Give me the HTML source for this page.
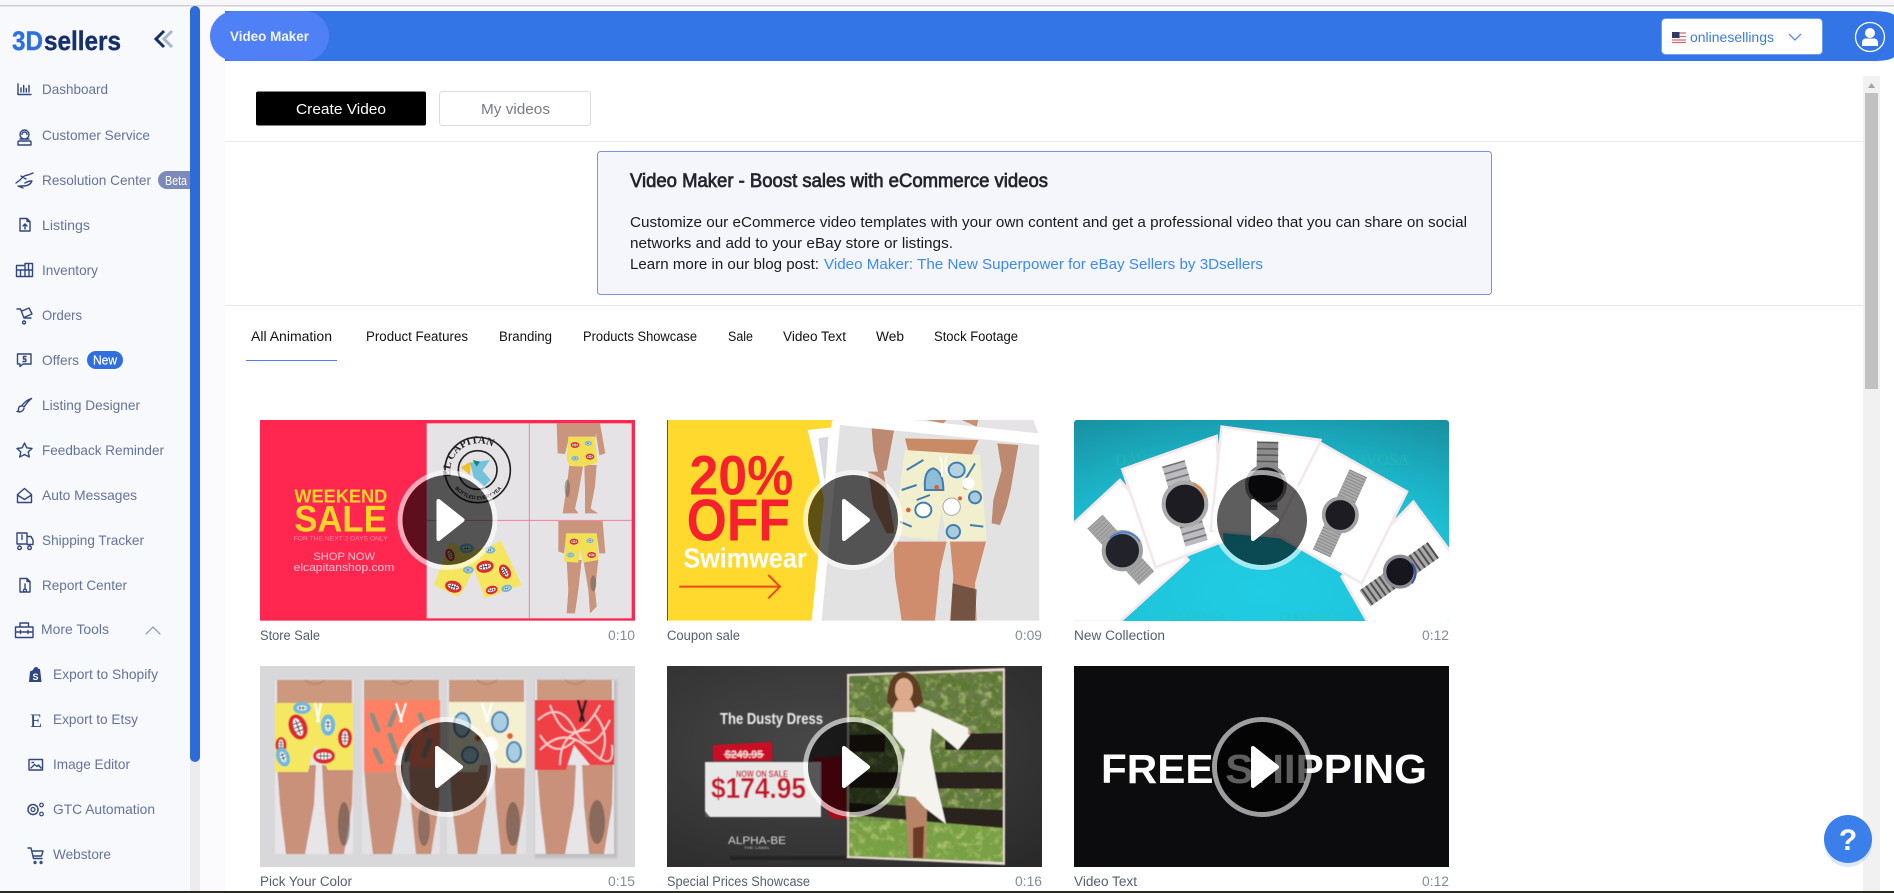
<!DOCTYPE html>
<html lang="en"><head><meta charset="utf-8"><title>3Dsellers Video Maker</title>
<style>
html,body{margin:0;padding:0;background:#fff;width:1894px;height:893px;overflow:hidden}
svg{display:block;font-family:"Liberation Sans",sans-serif}
.n{font-size:14px;fill:#64739c}
.i{fill:none;stroke:#2f4680;stroke-width:1.4;stroke-linejoin:round;stroke-linecap:round}
.t{font-size:13.5px;fill:#111}
.c{font-size:13.5px;fill:#555e70}
.d{font-size:13.5px;fill:#838c9a}
.p{font-size:15px;fill:#1a1a1a}
</style></head><body>
<svg width="1894" height="893" viewBox="0 0 1894 893" xmlns="http://www.w3.org/2000/svg">
<defs>
<filter id="b" x="-5%" y="-5%" width="110%" height="110%"><feGaussianBlur stdDeviation="0.5"/></filter>
<filter id="b2" x="-20%" y="-20%" width="140%" height="140%"><feGaussianBlur stdDeviation="1.2"/></filter>
<filter id="dk1" x="0" y="0" width="100%" height="100%"><feTurbulence type="fractalNoise" baseFrequency=".1" numOctaves="3" seed="4"/><feColorMatrix values="0 0 0 0 .14  0 0 0 0 .2  0 0 0 0 .07  2.6 0 0 0 -.8"/></filter>
<filter id="lt1" x="0" y="0" width="100%" height="100%"><feTurbulence type="fractalNoise" baseFrequency=".12" numOctaves="3" seed="11"/><feColorMatrix values="0 0 0 0 .62  0 0 0 0 .68  0 0 0 0 .25  2 0 0 0 -1"/></filter>
<clipPath id="c1"><rect x="260" y="420" width="375" height="201"/></clipPath>
<clipPath id="c2"><rect x="667" y="420" width="375" height="201"/></clipPath>
<clipPath id="c3"><rect x="1074" y="420" width="375" height="201" rx="3"/></clipPath>
<clipPath id="c4"><rect x="260" y="666" width="375" height="201"/></clipPath>
<clipPath id="c5"><rect x="667" y="666" width="375" height="201"/></clipPath>
<clipPath id="ph"><path d="M849 676 1003 671V862L849 856Z"/></clipPath>
<radialGradient id="teal" cx=".5" cy=".85" r="1"><stop offset="0" stop-color="#20cde4"/><stop offset=".55" stop-color="#1ec0d6"/><stop offset="1" stop-color="#178e9e"/></radialGradient>
<radialGradient id="dk" cx=".4" cy=".4" r=".8"><stop offset="0" stop-color="#484848"/><stop offset="1" stop-color="#2a2a2a"/></radialGradient>
<g id="mr"><ellipse rx="10" ry="7" fill="#dc2a32"/><ellipse rx="7" ry="3.200" fill="#fff"/><path d="M-6 0H6M-3-3V3M0-3V3M3-3V3" stroke="#222" stroke-width=".8"/></g>
<g id="mb"><ellipse rx="9" ry="6" fill="#6fb9dc"/><ellipse rx="5" ry="2.500" fill="#fff"/><path d="M-4 0H4M-2-2V2M1-2V2" stroke="#222" stroke-width=".8"/></g>
<g id="play"><circle r="47.500" fill="none" stroke="#fff" stroke-opacity=".6" stroke-width="5"/><circle r="45" fill="#000" fill-opacity=".63"/><path d="M-9-19 15 0-9 19Z" fill="#fff" stroke="#fff" stroke-width="4" stroke-linejoin="round"/></g>
<g id="man"><path d="M2 0H77L77 30H2Z" fill="#cc997f"/><path d="M30 0Q40 8 50 0" fill="none" stroke="#b07e66"/><path d="M2 85H41L39 125 30 174H11L5 125Z" fill="#c9917a"/><path d="M47 85H78L77 125 69 174H54L49 125Z" fill="#c9917a"/></g>
</defs>

<rect width="1894" height="893" fill="#fff"/>
<rect width="1894" height="5" fill="#f7f7f9"/>
<rect y="5" width="1894" height="1.500" fill="#cfcfcf"/>

<!-- sidebar -->
<rect y="7" width="190" height="884" fill="#f8f9fc"/>
<rect x="190" y="7" width="10" height="884" fill="#ececee"/>
<rect x="190" y="6" width="10" height="756" rx="5" fill="#2c6bd8"/>
<rect x="200" y="7" width="25" height="884" fill="#fbfbfe"/>
<text x="12" y="50" font-size="27" font-weight="700" fill="#2c70e2" stroke="#2c70e2" stroke-width=".4" textLength="31" lengthAdjust="spacingAndGlyphs">3D</text>
<text x="44" y="50" font-size="27" font-weight="700" fill="#15306c" stroke="#15306c" stroke-width=".4" textLength="77" lengthAdjust="spacingAndGlyphs">sellers</text>
<path d="M164 31 156 39 164 47" fill="none" stroke="#15306c" stroke-width="3"/>
<path d="M172 31 164 39 172 47" fill="none" stroke="#a8b4ce" stroke-width="3"/>

<g>
<text class="n" x="42" y="94" textLength="66" lengthAdjust="spacingAndGlyphs">Dashboard</text>
<text class="n" x="42" y="140" textLength="108" lengthAdjust="spacingAndGlyphs">Customer Service</text>
<text class="n" x="42" y="185" textLength="109" lengthAdjust="spacingAndGlyphs">Resolution Center</text>
<text class="n" x="42" y="230" textLength="48" lengthAdjust="spacingAndGlyphs">Listings</text>
<text class="n" x="42" y="275" textLength="56" lengthAdjust="spacingAndGlyphs">Inventory</text>
<text class="n" x="42" y="320" textLength="40" lengthAdjust="spacingAndGlyphs">Orders</text>
<text class="n" x="42" y="365" textLength="37" lengthAdjust="spacingAndGlyphs">Offers</text>
<text class="n" x="42" y="410" textLength="98" lengthAdjust="spacingAndGlyphs">Listing Designer</text>
<text class="n" x="42" y="455" textLength="122" lengthAdjust="spacingAndGlyphs">Feedback Reminder</text>
<text class="n" x="42" y="500" textLength="95" lengthAdjust="spacingAndGlyphs">Auto Messages</text>
<text class="n" x="42" y="545" textLength="102" lengthAdjust="spacingAndGlyphs">Shipping Tracker</text>
<text class="n" x="42" y="590" textLength="85" lengthAdjust="spacingAndGlyphs">Report Center</text>
<text class="n" x="41" y="634" textLength="68" lengthAdjust="spacingAndGlyphs">More Tools</text>
<text class="n" x="53" y="679" textLength="105" lengthAdjust="spacingAndGlyphs">Export to Shopify</text>
<text class="n" x="53" y="724" textLength="85" lengthAdjust="spacingAndGlyphs">Export to Etsy</text>
<text class="n" x="53" y="769" textLength="77" lengthAdjust="spacingAndGlyphs">Image Editor</text>
<text class="n" x="53" y="814" textLength="102" lengthAdjust="spacingAndGlyphs">GTC Automation</text>
<text class="n" x="53" y="859" textLength="58" lengthAdjust="spacingAndGlyphs">Webstore</text>
</g>
<path d="M158 180a9 9 0 0 1 9-9H190V189H167a9 9 0 0 1-9-9Z" fill="#7b8ab8"/>
<text x="165" y="185" font-size="13" fill="#fff" textLength="22" lengthAdjust="spacingAndGlyphs">Beta</text>
<rect x="87" y="351" width="36" height="18" rx="9" fill="#2f6fe0"/>
<text x="93" y="364.500" font-size="13" fill="#fff" stroke="#fff" stroke-width=".2" textLength="24" lengthAdjust="spacingAndGlyphs">New</text>

<!-- sidebar icons -->
<g class="i">
<path d="M18 84V94.500H31M21 92V88M23.700 92V85.500M26.300 92V88.500M29 92V85.500"/>
<path d="M19 141H30Q31 141 31 142.500V145H18V142.500Q18 141 19 141ZM20 134.500A4.500 4.500 0 1 1 29 134.500A4.500 4.500 0 0 1 20 134.500ZM22 134.500A2.500 2.500 0 0 1 27 134.500M20 139 29 139"/>
<path d="M16 183 20 180Q24 175 28 175L33 173M20 186 23 186Q30 186 32 181 28 181 25 183M21 176 26 179M23 188 18 186"/>
<path d="M20 218.500H27L30 221.500V231H20ZM27 218.500V221.500H30M25 229V224M23 226 25 224 27 226"/>
<path d="M16.500 276.500V265.500H25V263.500H32.500V276.500ZM16.500 270H32.500M20.500 270V276.500M25 265.500V276.500M29 270V276.500M28.500 263.500V270"/>
<path d="M17 309H20.500L24 318H31M22 311 29 308 32 314 25 317M24 321A1.500 1.500 0 1 0 24.100 321"/>
<path d="M17.500 354H31V364H23L20 366.500V364H17.500ZM26 356.500H23.500V359H25.800V361.500H23"/>
<path d="M31.500 398.500Q28 401 24 407L22 405.500Q26 400 31.500 398.500ZM21.500 406Q18 406 18.500 410.500 17.500 411.500 17 411.500 22 413 24 408.500"/>
<path d="M24.500 443 26.800 447.800 32 448.500 28.200 452 29.300 457 24.500 454.500 19.700 457 20.800 452 17 448.500 22.200 447.800Z"/>
<path d="M17.500 494.500 24.500 488.500 31.500 494.500V502.500H17.500ZM17.500 495 24.500 499.500 31.500 495"/>
<path d="M17 533H27V544H17ZM27 536.500H31L33 540V544.500H27M19.500 546A1.800 1.800 0 1 0 19.600 546M29.500 546A1.800 1.800 0 1 0 29.600 546M22 535V539.500"/>
<path d="M20 578.500H27L30 581.500V592H20ZM27 578.500V581.500H30M25 584V589M25 589A1.500 1.500 0 1 1 24.900 589"/>
<path d="M15.500 627H33V637.500H15.500ZM20 627V623H28.500V627M15.500 632H33M20.500 630.500V633.500M28 630.500V633.500"/>
<path d="M29 770H42.500V759.500H29ZM31 768 34.500 764.500 37 766.500 38.500 765 41 768M32 762.500H33.500"/>
<circle cx="33" cy="809.500" r="2" stroke-width="1.200"/><circle cx="33" cy="809.500" r="5" stroke-width="1.600" stroke-dasharray="2 1.300"/><circle cx="41.500" cy="805" r="1.800" stroke-width="1.200"/><circle cx="41.500" cy="814" r="1.800" stroke-width="1.200"/>
<path d="M28 848H31L33.500 858.500H42M32 851H43L41.500 856H33.500M35 861.500A1 1 0 1 0 35.100 861.500M41 861.500A1 1 0 1 0 41.100 861.500"/>
<path d="M146 634 153 627 160 634" stroke="#8392b8" stroke-width="1.200"/>
</g>
<path d="M30 671.500 33 670Q34 667 36 667 38 667 38.500 669L40 669 41.500 682H29Z" fill="#2f4680"/>
<text x="35.500" y="680" font-size="9" font-weight="700" fill="#fff" text-anchor="middle">S</text>
<text x="30" y="727" font-family="Liberation Serif, serif" font-size="19" fill="#2f4680" textLength="12" lengthAdjust="spacingAndGlyphs">E</text>

<!-- header -->
<path d="M225 11H1872Q1890 11 1894 15V57Q1890 61 1872 61H225Z" fill="#3375e6"/>
<rect x="210" y="11" width="119" height="50" rx="25" fill="#4f80f6"/>
<text x="230" y="41" font-size="14" font-weight="700" fill="#f2f5ff" textLength="79" lengthAdjust="spacingAndGlyphs">Video Maker</text>
<rect x="1661.500" y="18.500" width="161" height="36" rx="4" fill="#fff" stroke="#6f9df0"/>
<rect x="1672" y="32" width="14" height="11" fill="#fff"/>
<path d="M1672 33H1686M1672 36.500H1686M1672 40H1686M1672 42.500H1686" stroke="#d66a72" stroke-width="1.300"/>
<rect x="1672" y="32" width="7.500" height="6" fill="#303a68"/>
<text x="1690" y="42" font-size="14" fill="#3d7be0" textLength="84" lengthAdjust="spacingAndGlyphs">onlinesellings</text>
<path d="M1789 34 1795 40 1801 34" fill="none" stroke="#5a8ce6" stroke-width="1.300"/>
<circle cx="1870" cy="37" r="14.500" fill="none" stroke="#fff" stroke-width="1.300"/>
<circle cx="1870" cy="33" r="5" fill="#fff"/>
<path d="M1862 46V43Q1862 38.500 1866 38.500H1874Q1878 38.500 1878 43V46Q1878 46 1870 46Z" fill="#fff"/>

<!-- main -->
<rect x="225" y="61" width="1638" height="830" fill="#fff"/>
<rect x="256" y="91.500" width="170" height="34" rx="2" fill="#000"/>
<text x="296" y="114" font-size="14.500" fill="#fff" textLength="90" lengthAdjust="spacingAndGlyphs">Create Video</text>
<rect x="439.500" y="91.500" width="151" height="34" rx="3" fill="#fff" stroke="#dcdcdc"/>
<text x="481" y="114" font-size="14.500" fill="#777b85" textLength="69" lengthAdjust="spacingAndGlyphs">My videos</text>
<rect x="225" y="141" width="1638" height="1" fill="#ececec"/>
<rect x="597.500" y="151.500" width="894" height="143" rx="3" fill="#f5f6fc" stroke="#7c90e0"/>
<text x="630" y="187" font-size="19" fill="#24242c" stroke="#24242c" stroke-width=".7" textLength="418" lengthAdjust="spacingAndGlyphs">Video Maker - Boost sales with eCommerce videos</text>
<text class="p" x="630" y="227" textLength="837" lengthAdjust="spacingAndGlyphs">Customize our eCommerce video templates with your own content and get a professional video that you can share on social</text>
<text class="p" x="630" y="248" textLength="323" lengthAdjust="spacingAndGlyphs">networks and add to your eBay store or listings.</text>
<text class="p" x="630" y="269" textLength="189" lengthAdjust="spacingAndGlyphs">Learn more in our blog post:</text>
<text x="824" y="269" font-size="15" fill="#3a8af0" textLength="439" lengthAdjust="spacingAndGlyphs">Video Maker: The New Superpower for eBay Sellers by 3Dsellers</text>
<rect x="225" y="305" width="1638" height="1" fill="#e6e6e6"/>

<g>
<text class="t" x="251" y="341" textLength="81" lengthAdjust="spacingAndGlyphs">All Animation</text>
<text class="t" x="366" y="341" textLength="102" lengthAdjust="spacingAndGlyphs">Product Features</text>
<text class="t" x="499" y="341" textLength="53" lengthAdjust="spacingAndGlyphs">Branding</text>
<text class="t" x="583" y="341" textLength="114" lengthAdjust="spacingAndGlyphs">Products Showcase</text>
<text class="t" x="728" y="341" textLength="25" lengthAdjust="spacingAndGlyphs">Sale</text>
<text class="t" x="783" y="341" textLength="63" lengthAdjust="spacingAndGlyphs">Video Text</text>
<text class="t" x="876" y="341" textLength="28" lengthAdjust="spacingAndGlyphs">Web</text>
<text class="t" x="934" y="341" textLength="84" lengthAdjust="spacingAndGlyphs">Stock Footage</text>
</g>
<rect x="246" y="360" width="91" height="1" fill="#4a80f0"/>

<!-- thumb 1 -->
<g clip-path="url(#c1)"><g filter="url(#b)" transform="translate(250 410) scale(.33333)">
<rect x="30" y="30" width="1125" height="602" fill="#ff2650"/>
<rect x="530" y="40" width="615" height="585" fill="#e6e3e7"/>
<path d="M838 40V625M530 331H1145" stroke="#f0829a" stroke-width="3"/>
<circle cx="683" cy="180" r="98" fill="#e6e3e7" stroke="#222" stroke-width="5"/>
<circle cx="683" cy="180" r="58" fill="#e6e3e7" stroke="#222" stroke-width="5"/>
<path id="arc1" d="M602 200A82 82 0 0 1 770 170" fill="none"/>
<text font-size="32" font-family="Liberation Serif,serif" font-weight="700" fill="#222"><textPath href="#arc1">EL CAPITAN</textPath></text>
<path id="arc2" d="M615 235A90 90 0 0 0 755 235" fill="none"/>
<text font-size="15" font-weight="700" fill="#222"><textPath href="#arc2">BOTTLED EVERY YEAR</textPath></text>
<path d="M660 158 720 150 698 182 722 210 700 232 672 205Z" fill="#74c2dc"/><path d="M632 172 662 155 660 195Z" fill="#f0c020"/><path d="M668 150 690 155 680 170Z" fill="#1d7f8a"/>
<path d="M920 40H1050L1066 130 1048 136 1038 70 1035 92H955L945 132 923 130Z" fill="#c9957c"/>
<path d="M958 165H1000L985 250 975 296 985 310H938L950 230ZM1003 165H1040L1035 230 1022 296 1045 310H1005L1005 240Z" fill="#c9957c"/>
<path d="M955 80H1035L1042 158 1000 170 960 168 950 150Z" fill="#f2df55"/>
<use href="#mr" transform="translate(975 105) scale(1.300)"/><use href="#mr" transform="translate(1020 140) scale(1.300)"/><use href="#mb" transform="translate(1015 100) scale(1.200)"/><use href="#mb" transform="translate(975 145) scale(1.200)"/>
<ellipse cx="952" cy="235" rx="8" ry="26" fill="#5e5c58" opacity=".5"/>
<path d="M925 333H1058L1066 430 1048 430 1040 370H950L942 430 925 425Z" fill="#c9957c"/>
<path d="M950 450H995L985 540 975 610H950L955 540ZM1000 450H1045L1035 540 1040 590 1020 610 1015 540Z" fill="#c9957c"/>
<path d="M948 370H1040L1046 450 1000 458 990 420 985 458 942 455Z" fill="#f2df55"/>
<use href="#mr" transform="translate(972 395) scale(1.300)"/><use href="#mr" transform="translate(1025 435) scale(1.300)"/><use href="#mb" transform="translate(1020 392) scale(1.200)"/><use href="#mb" transform="translate(962 435) scale(1.200)"/>
<ellipse cx="1030" cy="520" rx="9" ry="24" fill="#5e5c58" opacity=".5"/>
<path d="M600 395Q680 440 752 392L815 525 705 565 672 478 640 540 622 560 552 525Z" fill="#f5e55f"/>
<use href="#mr" transform="translate(610 530) scale(2.500) rotate(15)"/><use href="#mr" transform="translate(705 470) scale(2.600) rotate(-10)"/><use href="#mr" transform="translate(765 485) scale(2.300) rotate(60)"/><use href="#mr" transform="translate(600 435) scale(1.900) rotate(70)"/><use href="#mr" transform="translate(725 540) scale(1.800) rotate(-15)"/>
<use href="#mb" transform="translate(650 415) scale(2.400)"/><use href="#mb" transform="translate(770 535) scale(1.800) rotate(-15)"/><use href="#mb" transform="translate(720 420) scale(1.800)"/><use href="#mb" transform="translate(655 480) scale(1.800)"/>
<text x="133" y="277" font-size="55" font-weight="700" fill="#ffd52b" textLength="279" lengthAdjust="spacingAndGlyphs">WEEKEND</text>
<text x="133" y="365" font-size="111" font-weight="700" fill="#ffd52b" textLength="277" lengthAdjust="spacingAndGlyphs">SALE</text>
<text x="131" y="391" font-size="18" fill="#ff8aa2" textLength="282" lengthAdjust="spacingAndGlyphs">FOR THE NEXT 2 DAYS ONLY</text>
<text x="190" y="450" font-size="32" fill="#ffc4ce" textLength="185" lengthAdjust="spacingAndGlyphs">SHOP NOW</text>
<text x="131" y="483" font-size="33" fill="#ffc4ce" textLength="302" lengthAdjust="spacingAndGlyphs">elcapitanshop.com</text>
</g></g>

<!-- thumb 2 -->
<g clip-path="url(#c2)"><g filter="url(#b)" transform="translate(660 410) scale(.33333)">
<rect x="21" y="30" width="1120" height="602" fill="#fff"/>
<path d="M21 30H520L455 632H21Z" fill="#ffd92e"/>
<rect x="21" y="30" width="3" height="602" fill="#6a5a18"/>
<path d="M443 60 515 52 500 300 460 130Z" fill="#fff"/><path d="M475 85 505 80 495 230Z" fill="#d9d8de"/>
<path d="M516 32 1140 72V632H455Z" fill="#fff"/>
<path d="M540 45 1138 105V632H485Z" fill="#e2e2e2"/>
<path d="M760 30H1120L1136 70Z" fill="#e6e3e6"/>
<path d="M800 30H860L850 40ZM905 30H955L950 50Z" fill="#c89070"/>
<path d="M635 55 702 62 680 180 655 190 640 120Z" fill="#bd8970"/>
<path d="M735 85 955 90 935 135 745 125Z" fill="#c98a66"/>
<path d="M1012 100 1075 105 1052 240 1040 290 1020 345 995 340 1000 270 1025 180Z" fill="#bd8970"/>
<path d="M625 185H670L705 370H680L640 290Z" fill="#bd8970"/>
<path d="M700 395H860L840 480 825 632H725L705 500ZM870 395H978L945 520 950 632H870L880 500Z" fill="#cf8d6e"/>
<path d="M878 520 950 538 945 632H872Z" fill="#3b2f28" opacity=".62"/>
<path d="M735 120 960 135 980 390 860 395 845 300 830 392 700 375Z" fill="#f2efcf"/>
<g fill="none" stroke="#3f7eae" stroke-width="6"><path d="M795 240Q790 180 820 175 850 185 850 240Z" fill="#8fbcd8"/><ellipse cx="890" cy="180" rx="24" ry="22" fill="#b5d2e2"/><ellipse cx="790" cy="300" rx="24" ry="22" fill="#fff"/><ellipse cx="880" cy="365" rx="20" ry="20" fill="#a9cadf"/><ellipse cx="945" cy="262" rx="18" ry="18" fill="#a9cadf"/><path d="M725 240 770 225M930 345 970 350M720 335 755 350M770 270 810 255M945 160 915 210M740 180 790 150"/></g>
<g fill="#e0602f"><circle cx="920" cy="228" r="11"/><circle cx="830" cy="232" r="7"/><circle cx="745" cy="300" r="7"/><circle cx="900" cy="265" r="6"/></g>
<circle cx="875" cy="290" r="26" fill="#fff" stroke="#aaa" stroke-width="3"/><circle cx="925" cy="220" r="18" fill="#fff"/><path d="M840 140Q850 170 845 200M860 140Q850 170 865 195" stroke="#fff" stroke-width="5" fill="none"/>
<text x="88" y="253" font-size="168" font-weight="700" fill="#f5232f" textLength="312" lengthAdjust="spacingAndGlyphs">20%</text>
<text x="80" y="392" font-size="178" font-weight="700" fill="#f5232f" textLength="310" lengthAdjust="spacingAndGlyphs">OFF</text>
<text x="70" y="472" font-size="82" font-weight="700" fill="#fff" textLength="370" lengthAdjust="spacingAndGlyphs">Swimwear</text>
<path d="M58 530H360M325 495 360 530 325 565" fill="none" stroke="#ee4a1e" stroke-width="6"/>
</g></g>

<!-- thumb 3 -->
<g clip-path="url(#c3)"><rect x="1074" y="420" width="375" height="201" fill="url(#teal)"/><g filter="url(#b)" transform="translate(1065 410) scale(.33333)">
<g font-family="Liberation Serif,serif" font-size="48" fill="#2ac3a6" fill-opacity=".45"><text x="150" y="165">DAVOSA</text><text x="840" y="165">DAVOSA</text><text x="295" y="640">DAVOSA</text><text x="640" y="640">DAVOSA</text><text x="495" y="465" fill-opacity=".4" font-size="40">DAVOSA</text></g>
<path d="M20 345 165 210 370 450 165 635H20Z" fill="#fff" stroke="#f5e8ec" stroke-width="8"/>
<path d="M1045 275 1160 430V640H910L830 500Z" fill="#fff" stroke="#f5e8ec" stroke-width="8"/>
<path d="M172 178 455 78 472 395 272 472Z" fill="#fff" stroke="#f5e8ec" stroke-width="8"/>
<path d="M470 50 766 90 690 385 437 362Z" fill="#fff" stroke="#f5e8ec" stroke-width="8"/>
<path d="M765 98 1026 245 890 520 627 370Z" fill="#fff" stroke="#f5e8ec" stroke-width="8"/>
<g fill="none">
<path d="M90 335 245 505" stroke="#a8a8a8" stroke-width="62"/><path d="M90 335 245 505" stroke="#7f7f7f" stroke-width="62" stroke-dasharray="3 7" opacity=".5"/><circle cx="172" cy="422" r="56" fill="#20242c" stroke="#a0a0a0" stroke-width="12"/><path d="M135 385A56 56 0 0 1 225 395" stroke="#3f7fd8" stroke-width="5"/>
<path d="M325 160 395 400" stroke="#bcbcc0" stroke-width="70"/><path d="M325 160 395 400" stroke="#55555a" stroke-width="70" stroke-dasharray="5 16" opacity=".7"/><circle cx="360" cy="282" r="64" fill="#1c1c20" stroke="#aaa" stroke-width="12"/><path d="M385 222A64 64 0 0 1 420 262" stroke="#e28038" stroke-width="6"/>
<path d="M608 95 605 300" stroke="#8c8c8c" stroke-width="64"/><path d="M608 95 605 300" stroke="#444" stroke-width="64" stroke-dasharray="5 14" opacity=".7"/><circle cx="603" cy="225" r="58" fill="#18181c" stroke="#888" stroke-width="10"/>
<path d="M880 190 770 430" stroke="#ababab" stroke-width="58"/><path d="M880 190 770 430" stroke="#777" stroke-width="58" stroke-dasharray="3 6" opacity=".6"/><circle cx="826" cy="315" r="50" fill="#1c1c20" stroke="#a0a0a0" stroke-width="11"/>
<path d="M1105 420 900 565" stroke="#a8a8a8" stroke-width="58"/><path d="M1105 420 900 565" stroke="#333" stroke-width="58" stroke-dasharray="6 10" opacity=".75"/><circle cx="1005" cy="485" r="46" fill="#15151a" stroke="#8a8a92" stroke-width="10"/><path d="M1040 460A46 46 0 0 1 1040 520" stroke="#3554b0" stroke-width="6"/>
</g>
</g></g>

<!-- thumb 4 -->
<g clip-path="url(#c4)"><rect x="260" y="666" width="375" height="201" fill="#d8d8da"/><rect x="535" y="680" width="82" height="178" fill="#bdbdc0" filter="url(#b2)"/><g filter="url(#b)">
<rect x="275" y="680" width="78" height="174" fill="#e8e5e9"/><rect x="362" y="680" width="78" height="174" fill="#e2e1e4"/><rect x="447" y="680" width="79" height="174" fill="#e2e1e4"/><rect x="535" y="680" width="79" height="174" fill="#e8e5e9"/>
<use href="#man" x="275" y="680"/><use href="#man" x="362" y="680"/><use href="#man" x="447" y="680"/><use href="#man" x="535" y="680"/>
<ellipse cx="344" cy="824" rx="6" ry="22" fill="#4c4540" opacity=".5"/><ellipse cx="424" cy="826" rx="6" ry="20" fill="#4c4540" opacity=".45"/><ellipse cx="513" cy="824" rx="7" ry="22" fill="#4c4540" opacity=".5"/><ellipse cx="597" cy="822" rx="8" ry="22" fill="#4c4540" opacity=".5"/>
<path d="M275 703H353V770H328L315 745 308 772H275Z" fill="#f5e860"/>
<use href="#mr" transform="translate(298 727) scale(1.300) rotate(70)"/><use href="#mr" transform="translate(345 738) scale(1) rotate(90)"/><use href="#mr" transform="translate(324 756) scale(1.100)"/><use href="#mr" transform="translate(281 745) scale(.8) rotate(90)"/>
<use href="#mb" transform="translate(283 757) scale(1.100) rotate(70)"/><use href="#mb" transform="translate(328 725) scale(1.200) rotate(90)"/><use href="#mb" transform="translate(302 708) scale(1)"/>
<path d="M315 703 319 722M321 703 317 722" stroke="#fff" stroke-width="2"/>
<path d="M364 700H440V768H412L402 745 392 772H364Z" fill="#ff8064"/><g stroke="#8c8f82" stroke-width="5" stroke-linecap="round"><path d="M372 715 378 730M390 735 396 752M420 715 426 730M430 740 424 756M375 750 381 762M410 745 406 760M395 712 390 725"/></g><path d="M396 703 402 722M406 703 400 722" stroke="#fff" stroke-width="2"/>
<path d="M449 702H526V768H498L486 745 478 772H449Z" fill="#f5f0d0"/><g fill="#a9cde2" stroke="#3f7fb0" stroke-width="2"><ellipse cx="462" cy="725" rx="8" ry="12"/><ellipse cx="500" cy="722" rx="8" ry="10"/><ellipse cx="470" cy="755" rx="8" ry="8"/><ellipse cx="514" cy="752" rx="7" ry="10"/></g><circle cx="490" cy="745" r="8" fill="#fff"/><circle cx="478" cy="738" r="3" fill="#e0602f"/><circle cx="510" cy="736" r="3" fill="#e0602f"/><path d="M482 703 488 722M492 703 486 722" stroke="#fff" stroke-width="2"/>
<path d="M535 700H614V765H590L574 745 566 770H535Z" fill="#ee4045"/><g fill="none" stroke="#f6d0cc" stroke-width="1.800"><path d="M538 720Q560 700 575 730T610 720M540 750Q565 725 590 750T612 745M550 705Q570 760 600 705M560 765Q560 730 590 730M540 735Q555 760 575 740M595 715Q612 735 600 760"/></g><path d="M578 700 584 722M586 700 580 722" stroke="#222" stroke-width="2.500"/>
</g></g>

<!-- thumb 5 -->
<g clip-path="url(#c5)"><rect x="667" y="666" width="375" height="201" fill="url(#dk)"/><g filter="url(#b)">
<rect x="730" y="856" width="120" height="4" fill="#222" opacity=".8"/>
<path d="M847 674 1005 668V865L847 858Z" fill="#e6d8cc"/>
<g clip-path="url(#ph)">
<rect x="849" y="671" width="154" height="192" fill="#5a7830"/>
<rect x="849" y="815" width="154" height="48" fill="#78a045"/>
<rect x="849" y="671" width="154" height="150" filter="url(#dk1)"/>
<rect x="849" y="671" width="154" height="192" filter="url(#lt1)"/>
<path d="M849 735 885 734V752L849 752ZM945 734 1003 733V750L945 750ZM849 772 1003 772V789L849 788ZM849 803 1003 810V828L849 815Z" fill="#2c221c"/>
</g>
<path d="M918 798H905L909 858H926L927 810Z" fill="#b88468"/><path d="M913 828 924 826 923 858H913Z" fill="#6a3a22"/>
<path d="M893 706Q903 716 918 706L932 712 968 728 970 735 958 750 944 738 932 728 930 748 938 790 946 824 925 808 915 797 898 795 905 750 893 735Z" fill="#f5f3ee"/>
<path d="M968 728 972 732 968 735Z" fill="#cf9d84"/>
<path d="M887 702Q888 672 903 672 920 672 923 702L916 708H892Z" fill="#5e3c24"/><ellipse cx="904" cy="690" rx="9" ry="12" fill="#dcaa8c"/><path d="M897 700H911L916 712H891Z" fill="#dcaa8c"/>
<text x="720" y="724" font-size="16" font-weight="700" fill="#eee" textLength="103" lengthAdjust="spacingAndGlyphs">The Dusty Dress</text>
<path d="M813 758 847 756V819H832L813 790Z" fill="#a30a1a"/>
<path d="M713 745 772 742V761H713Z" fill="#c90d20"/>
<text x="725" y="758" font-size="11" font-weight="700" fill="#f5d8d8" textLength="38" lengthAdjust="spacingAndGlyphs">$249.95</text><path d="M724 754.500H764" stroke="#f5d8d8"/>
<rect x="705" y="762" width="116" height="55" fill="#e8e8e8"/>
<path d="M705 811 710 817H705Z" fill="#555"/>
<text x="736" y="777" font-size="9" font-weight="700" fill="#c5182c" textLength="52" lengthAdjust="spacingAndGlyphs">NOW ON SALE</text>
<text x="711" y="798" font-size="29" font-weight="700" fill="#c5182c" textLength="95" lengthAdjust="spacingAndGlyphs">$174.95</text>
<text x="728" y="844" font-size="11" fill="#d8d8d8" textLength="58" lengthAdjust="spacingAndGlyphs">ALPHA-BE</text>
<text x="744" y="849" font-size="4" fill="#bbb" textLength="26" lengthAdjust="spacingAndGlyphs">THE LABEL</text>
</g></g>

<!-- thumb 6 -->
<rect x="1074" y="666" width="375" height="201" fill="#0c0c0e"/>
<text x="1101" y="783" font-size="41" font-weight="700" fill="#fff" textLength="326" lengthAdjust="spacingAndGlyphs">FREE SHIPPING</text>

<!-- play buttons -->
<use href="#play" x="447.500" y="520"/>
<use href="#play" x="853" y="520"/>
<use href="#play" x="1262" y="520"/>
<use href="#play" x="446" y="767"/>
<use href="#play" x="853" y="767"/>
<use href="#play" x="1262" y="767"/>

<!-- captions -->
<text class="c" x="260" y="640" textLength="60" lengthAdjust="spacingAndGlyphs">Store Sale</text><text class="d" x="608" y="640" textLength="27" lengthAdjust="spacingAndGlyphs">0:10</text>
<text class="c" x="667" y="640" textLength="73" lengthAdjust="spacingAndGlyphs">Coupon sale</text><text class="d" x="1015" y="640" textLength="27" lengthAdjust="spacingAndGlyphs">0:09</text>
<text class="c" x="1074" y="640" textLength="91" lengthAdjust="spacingAndGlyphs">New Collection</text><text class="d" x="1422" y="640" textLength="27" lengthAdjust="spacingAndGlyphs">0:12</text>
<text class="c" x="260" y="886" textLength="92" lengthAdjust="spacingAndGlyphs">Pick Your Color</text><text class="d" x="608" y="886" textLength="27" lengthAdjust="spacingAndGlyphs">0:15</text>
<text class="c" x="667" y="886" textLength="143" lengthAdjust="spacingAndGlyphs">Special Prices Showcase</text><text class="d" x="1015" y="886" textLength="27" lengthAdjust="spacingAndGlyphs">0:16</text>
<text class="c" x="1074" y="886" textLength="63" lengthAdjust="spacingAndGlyphs">Video Text</text><text class="d" x="1422" y="886" textLength="27" lengthAdjust="spacingAndGlyphs">0:12</text>

<!-- right scrollbar -->
<rect x="1863" y="76" width="17" height="815" fill="#f1f1f1"/>
<rect x="1865" y="93" width="13" height="296" fill="#c1c1c1"/>
<path d="M1868 88 1871.500 83 1875 88Z" fill="#a3a3a3"/>

<!-- help -->
<circle cx="1848" cy="843" r="24" fill="#3b7fea" fill-opacity=".18"/>
<circle cx="1848" cy="839" r="24" fill="#3b7fea"/>
<text x="1848" y="850" font-size="30" font-weight="700" fill="#fff" text-anchor="middle">?</text>

<rect y="891" width="1894" height="2" fill="#2b2b22"/>
</svg>
</body></html>
